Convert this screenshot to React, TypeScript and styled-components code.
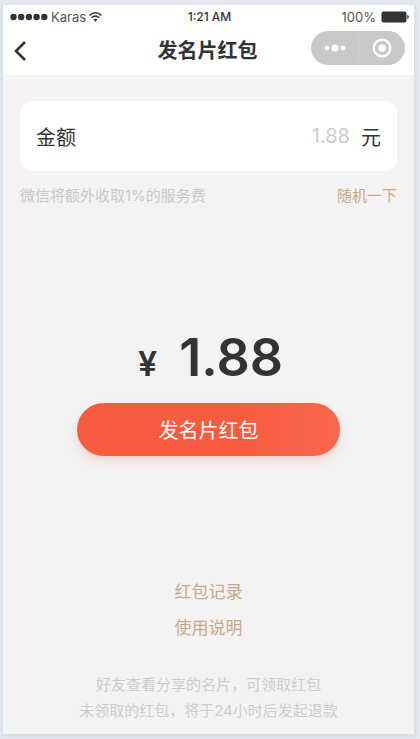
import React from "react";
import styled, { createGlobalStyle } from "styled-components";

const GlobalStyle = createGlobalStyle`
  *, *::before, *::after { box-sizing: border-box; }
  body {
    margin: 0;
    background: #e7e9ee;
    color: #333;
    font-family: Inter, "Noto Sans CJK SC", sans-serif;
  }
`;

const Page = styled.div`
  min-height: 100vh;
  padding: 5px 6px 5px 3px;
  display: flex;
`;

const Phone = styled.div`
  flex: 1;
  min-width: 0;
  display: flex;
  flex-direction: column;
  background: #f3f3f3;
  box-shadow: 0 1px 2px 2px #d6dfe8;
`;

const Header = styled.header`
  background: #fff;
  height: 70px;
`;

const StatusBar = styled.div`
  display: grid;
  grid-template-columns: 1fr auto 1fr;
  align-items: center;
  height: 23px;
  padding: 0 5px 0 7px;
  font-size: 13px;
`;

const StatusGroup = styled.div<{ $end?: boolean }>`
  display: flex;
  align-items: center;
  justify-content: ${(p) => (p.$end ? "flex-end" : "flex-start")};
  gap: ${(p) => (p.$end ? 5 : 3)}px;
  color: #555;
`;

const Clock = styled.time`
  font-size: 12px;
  font-weight: 500;
`;

const NavBar = styled.div`
  display: grid;
  grid-template-columns: 1fr auto 1fr;
  align-items: center;
  height: 46px;
  padding: 0 9px 0 7px;
`;

const IconButton = styled.button`
  display: flex;
  align-items: center;
  justify-content: center;
  padding: 0;
  border: 0;
  background: none;
  cursor: pointer;
`;

const BackButton = styled(IconButton)`
  width: 20px;
  height: 32px;
  justify-self: start;
`;

const Title = styled.h1`
  margin: 0;
  font-size: 20px;
  line-height: 28px;
  font-weight: 700;
`;

const Capsule = styled.div`
  justify-self: end;
  display: flex;
  align-items: center;
  height: 34px;
  margin-bottom: 6px;
  border-radius: 17px;
  background: #c9c9c9;
`;

const CapsuleButton = styled(IconButton)`
  width: 47px;
  height: 28px;

  & + & {
    border-left: 1px solid #d4d4d4;
  }
`;

const Main = styled.main`
  flex: 1;
  display: flex;
  flex-direction: column;
  padding: 26px 17px 10px;
`;

const AmountField = styled.label`
  display: flex;
  align-items: center;
  height: 70px;
  padding: 0 16px;
  border-radius: 12px;
  background: #fff;
  font-size: 20px;
`;

const AmountInput = styled.input`
  flex: 1;
  min-width: 0;
  padding: 0;
  margin: 0 11px;
  border: 0;
  outline: 0;
  background: none;
  color: #333;
  font: inherit;
  text-align: right;

  &::placeholder {
    color: #ccc;
    opacity: 1;
  }
`;

const NoteRow = styled.div`
  display: flex;
  justify-content: space-between;
  align-items: center;
  margin-top: 13px;
  font-size: 15px;
  line-height: 24px;
  color: #c8c8c8;
`;

const RandomButton = styled.button`
  padding: 0;
  border: 0;
  background: none;
  color: #c9a888;
  font: inherit;
  cursor: pointer;
`;

const Total = styled.div`
  display: flex;
  justify-content: center;
  align-items: baseline;
  gap: 22px;
  margin-top: 118px;
  padding-left: 4px;
  font-size: 52px;
  line-height: 64px;
  font-weight: 600;
`;

const Currency = styled.span`
  font-size: 34px;
`;

const SendButton = styled.button`
  align-self: center;
  width: 70%;
  height: 53px;
  margin-top: 7px;
  padding: 0;
  border: 0;
  border-radius: 27px;
  background: linear-gradient(90deg, #f85c3f 60%, #f8674e 100%);
  box-shadow: 0 5px 10px rgba(248, 92, 63, 0.2);
  color: #fff;
  font: inherit;
  font-size: 20px;
  cursor: pointer;
`;

const Links = styled.nav`
  display: flex;
  flex-direction: column;
  align-items: center;
  gap: 12px;
  margin-top: auto;
`;

const TextLink = styled.a`
  color: #c9a888;
  font-size: 17px;
  line-height: 24px;
  text-decoration: none;
`;

const Footer = styled.p`
  margin: 32px 0 0;
  font-size: 15px;
  line-height: 26px;
  text-align: center;
  color: #ccc;
`;

const SignalDots = () => (
  <svg width="38" height="8" viewBox="0 0 38 8" fill="#333" aria-hidden="true">
    {[3.5, 11.2, 18.9, 26.6, 34.3].map((x) => (
      <circle key={x} cx={x} cy="4" r="3.2" />
    ))}
  </svg>
);

const Wifi = () => (
  <svg width="13" height="10" viewBox="0 0 13 10" fill="none" stroke="#333" strokeWidth="1.6" aria-hidden="true">
    <path d="M.6 3.5C4-.1 9-.1 12.4 3.5" />
    <path d="M2.7 5.8c2.2-2.2 5.4-2.2 7.6 0" />
    <path d="M6.5 9.8 4.5 7.6c1.2-1 2.8-1 4 0z" fill="#333" stroke="none" />
  </svg>
);

const Battery = () => (
  <svg width="28" height="12" viewBox="0 0 28 12" fill="#333" aria-hidden="true">
    <rect x=".5" y=".5" width="25" height="11" rx="2" />
    <path d="M26.3 3.8c2 .8 2 3.6 0 4.4z" />
  </svg>
);

const Chevron = () => (
  <svg width="14" height="22" viewBox="0 0 14 22" fill="none" stroke="#333" strokeWidth="2.6" aria-hidden="true">
    <path d="M12 2 3 11l9 9" />
  </svg>
);

const MoreDots = () => (
  <svg width="24" height="10" viewBox="0 0 24 10" fill="#fff" aria-hidden="true">
    <circle cx="4" cy="5" r="2.4" />
    <circle cx="12" cy="5" r="3.5" />
    <circle cx="20" cy="5" r="2.4" />
  </svg>
);

const Target = () => (
  <svg width="20" height="20" viewBox="0 0 20 20" aria-hidden="true">
    <circle cx="10" cy="10" r="8.3" fill="none" stroke="#fff" strokeWidth="2.2" />
    <circle cx="10" cy="10" r="3.7" fill="#fff" />
  </svg>
);

export default function App() {
  return (
    <>
      <GlobalStyle />
      <Page>
        <Phone>
          <Header>
            <StatusBar>
              <StatusGroup>
                <SignalDots />
                <span>Karas</span>
                <Wifi />
              </StatusGroup>
              <Clock>1:21 AM</Clock>
              <StatusGroup $end>
                <span>100%</span>
                <Battery />
              </StatusGroup>
            </StatusBar>
            <NavBar>
              <BackButton type="button" aria-label="返回">
                <Chevron />
              </BackButton>
              <Title>发名片红包</Title>
              <Capsule>
                <CapsuleButton type="button" aria-label="更多">
                  <MoreDots />
                </CapsuleButton>
                <CapsuleButton type="button" aria-label="关闭">
                  <Target />
                </CapsuleButton>
              </Capsule>
            </NavBar>
          </Header>
          <Main>
            <AmountField>
              <span>金额</span>
              <AmountInput type="text" inputMode="decimal" placeholder="1.88" />
              <span>元</span>
            </AmountField>
            <NoteRow>
              <span>微信将额外收取1%的服务费</span>
              <RandomButton type="button">随机一下</RandomButton>
            </NoteRow>
            <Total>
              <Currency>¥</Currency>
              <span>1.88</span>
            </Total>
            <SendButton type="button">发名片红包</SendButton>
            <Links>
              <TextLink href="#records">红包记录</TextLink>
              <TextLink href="#help">使用说明</TextLink>
            </Links>
            <Footer>
              好友查看分享的名片，可领取红包
              <br />
              未领取的红包，将于24小时后发起退款
            </Footer>
          </Main>
        </Phone>
      </Page>
    </>
  );
}
